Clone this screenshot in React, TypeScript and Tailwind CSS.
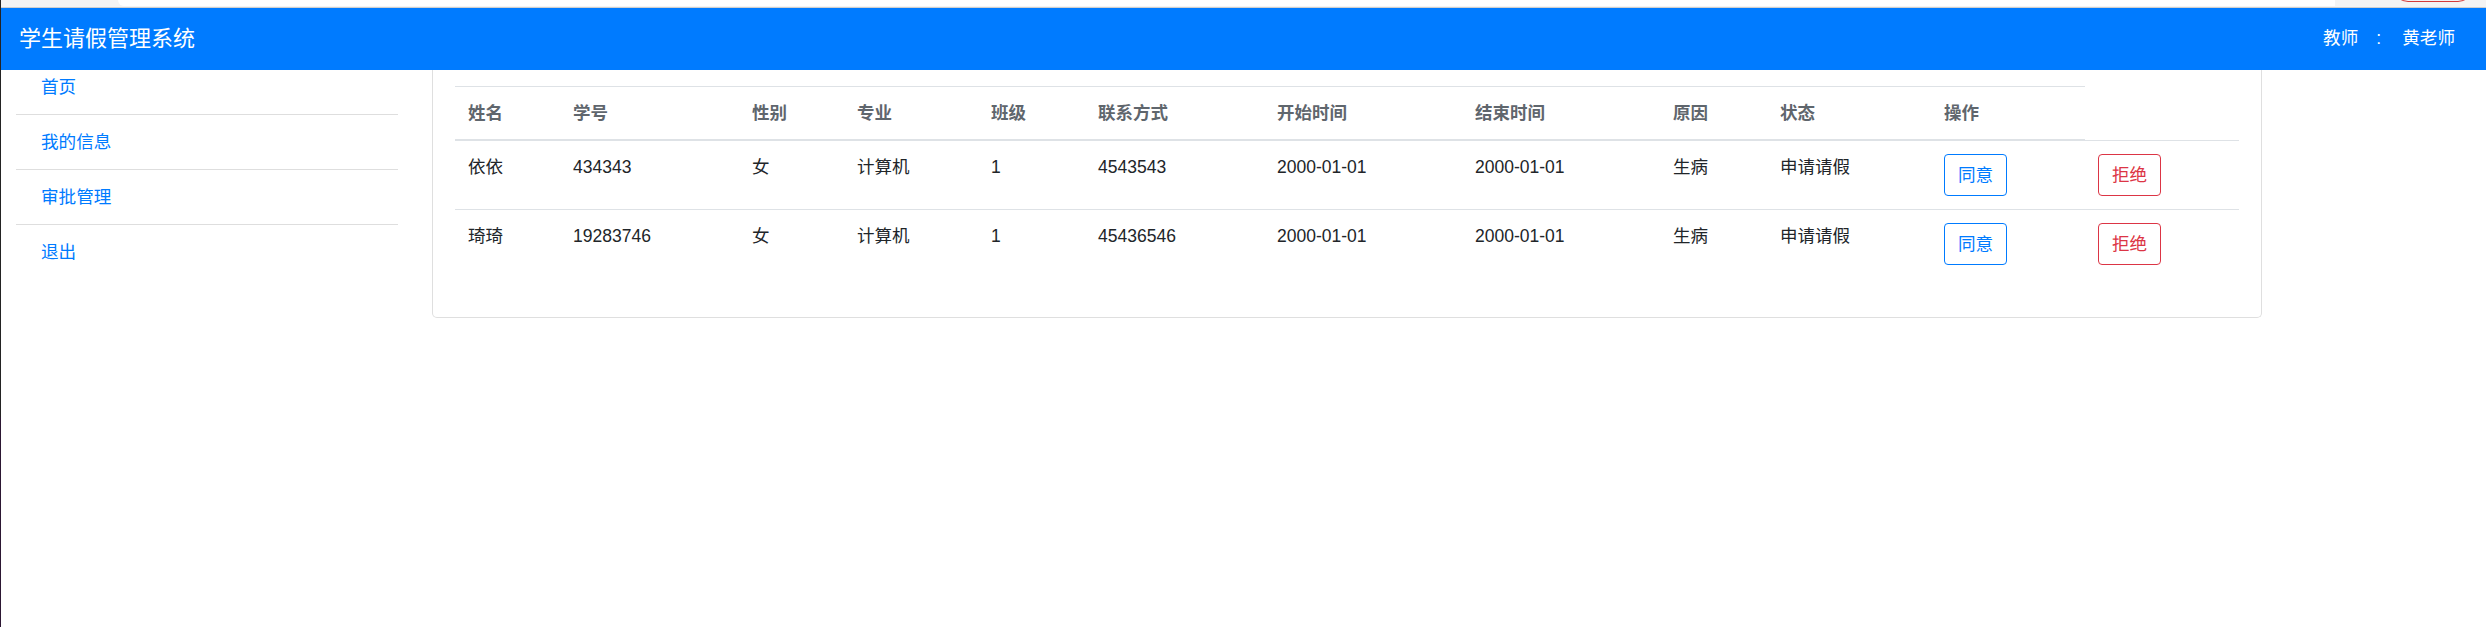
const menu = ["首页", "我的信息", "审批管理", "退出"];

const heads = ["姓名", "学号", "性别", "专业", "班级", "联系方式", "开始时间", "结束时间", "原因", "状态", "操作"];

const widths = [105, 179, 105, 134, 107, 179, 198, 198, 107, 164, 154, 154];

const rows = [
  ["依依", "434343", "女", "计算机", "1", "4543543", "2000-01-01", "2000-01-01", "生病", "申请请假"],
  ["琦琦", "19283746", "女", "计算机", "1", "45436546", "2000-01-01", "2000-01-01", "生病", "申请请假"],
];

export default function App() {
  return (
    <div
      className="flex h-[627px] w-full overflow-hidden bg-white text-[#212529]"
      style={{ fontFamily: '"Liberation Sans", "Noto Sans CJK SC", sans-serif' }}
    >
      {/* left edge of the window */}
      <div className="w-px shrink-0 bg-[linear-gradient(to_bottom,#232323_417px,#2c1733_417px)]" />

      <div className="flex min-w-0 flex-1 flex-col">
        {/* strip above the navbar */}
        <div className="flex h-[8px] shrink-0 overflow-hidden border-b border-[#cfcfcf] bg-[#f4f4f4]">
          <div className="w-[117px] shrink-0" />
          <div className="h-[6px] w-[2217px] shrink-0 rounded-bl-[8px] bg-white" />
          <div className="w-[58px] shrink-0" />
          <div className="-mt-[28px] h-[30px] w-[80px] shrink-0 rounded-full border border-[#d43b3b] bg-[#f4f4f4]" />
        </div>

        {/* navbar */}
        <div className="flex h-[62px] shrink-0 items-center justify-between bg-[#007bff] pl-[18px] pr-[31px] text-white">
          <div className="text-[22px] leading-none">学生请假管理系统</div>
          <div className="flex items-center text-[17.6px] leading-none">
            <span>教师</span>
            <span className="ml-[18px]">:</span>
            <span className="ml-[21px]">黄老师</span>
          </div>
        </div>

        <div className="flex flex-1">
          {/* sidebar */}
          <div className="w-[431px] shrink-0">
            <ul className="ml-[15px] w-[382px]">
              {menu.map((m, i) => (
                <li
                  key={m}
                  className={`pl-[25px] text-[17.6px] leading-[26px] text-[#007bff] ${
                    i === 0 ? "pt-[4px] pb-[14px]" : "py-[14px]"
                  } ${i < menu.length - 1 ? "border-b border-[#dedede]" : ""}`}
                >
                  {m}
                </li>
              ))}
            </ul>
          </div>

          {/* card */}
          <div className="self-start w-[1830px] shrink-0 rounded-b-[5px] border border-t-0 border-[#dfdfdf] px-[22px] pt-[16px] pb-[39px]">
            <table className="w-[1784px] table-fixed border-collapse text-[17.5px] leading-[26px]">
              <colgroup>
                {widths.map((w, i) => (
                  <col key={i} style={{ width: w }} />
                ))}
              </colgroup>
              <thead>
                <tr>
                  {heads.map((h) => (
                    <th
                      key={h}
                      className="border-t border-b-2 border-[#dee2e6] p-[13px] text-left align-bottom font-bold text-[#5f666d]"
                    >
                      {h}
                    </th>
                  ))}
                </tr>
              </thead>
              <tbody>
                {rows.map((r, ri) => (
                  <tr key={ri}>
                    {r.map((c, ci) => (
                      <td key={ci} className="border-t border-[#dee2e6] p-[13px] align-top">
                        {c}
                      </td>
                    ))}
                    <td className="border-t border-[#dee2e6] p-[13px] align-top">
                      <button className="rounded-[4px] border border-[#007bff] px-[13px] py-[7px] text-[17.6px] leading-[26px] text-[#007bff]">
                        同意
                      </button>
                    </td>
                    <td className="border-t border-[#dee2e6] p-[13px] align-top">
                      <button className="rounded-[4px] border border-[#dc3545] px-[13px] py-[7px] text-[17.6px] leading-[26px] text-[#dc3545]">
                        拒绝
                      </button>
                    </td>
                  </tr>
                ))}
              </tbody>
            </table>
          </div>
        </div>
      </div>
    </div>
  );
}
